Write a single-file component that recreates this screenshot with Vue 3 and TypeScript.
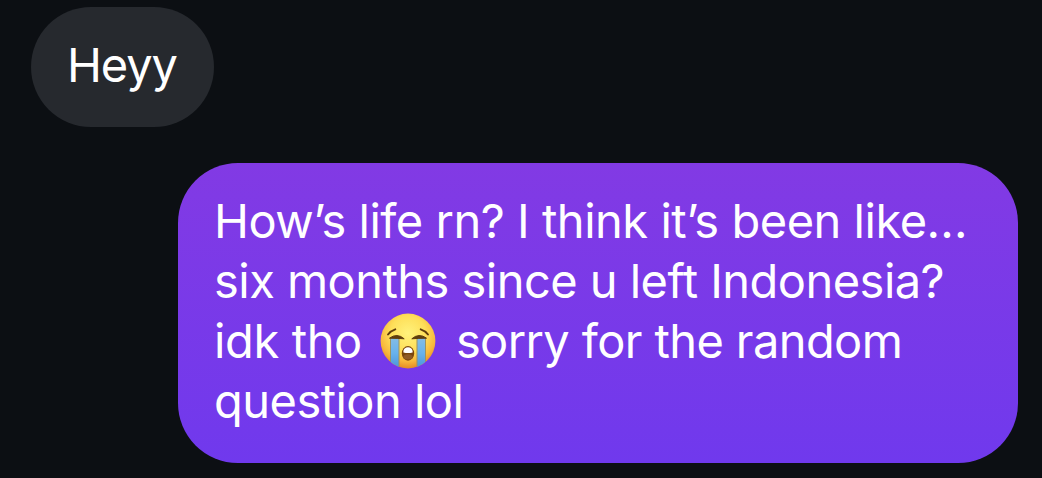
<script setup lang="ts">
interface TextLine {
  id: string
  text: string
  dots?: string
  after?: string
}

const greeting = 'Heyy'
const lines: TextLine[] = [
  { id: 'one', text: 'How’s life rn? I think it’s been like', dots: '...' },
  { id: 'two', text: 'six months since u left Indonesia?' },
  { id: 'three', text: 'idk tho', after: 'sorry for the random' },
  { id: 'four', text: 'question lol' },
]
</script>

<template>
  <main class="chat">
    <div class="bubble received"><span class="hey">{{ greeting }}</span></div>
    <div class="bubble sent">
      <div v-for="line in lines" :key="line.id" class="line" :class="line.id">
        <span class="text">{{ line.text }}<span v-if="line.dots" class="dots">{{ line.dots }}</span></span>
        <svg v-if="line.after" class="emoji" viewBox="0 0 56 56" role="img" aria-label="Loudly crying face">
          <defs>
            <radialGradient id="face" cx="50%" cy="36%" r="64%">
              <stop offset="0" stop-color="#fff27c" />
              <stop offset="0.5" stop-color="#fedf59" />
              <stop offset="0.8" stop-color="#f8b83b" />
              <stop offset="1" stop-color="#e58a25" />
            </radialGradient>
            <linearGradient id="tear" x1="0" x2="0" y1="0" y2="1">
              <stop offset="0" stop-color="#86bde4" />
              <stop offset="0.5" stop-color="#68b2ec" />
              <stop offset="1" stop-color="#4a92d8" />
            </linearGradient>
            <clipPath id="disc"><circle cx="28" cy="28" r="27.4" /></clipPath>
          </defs>
          <circle cx="28" cy="28" r="27.4" fill="url(#face)" />
          <g clip-path="url(#disc)">
            <path d="M10.500 24.500Q15 23 19 25V56H10.500Z" fill="url(#tear)" stroke="#9b9262" stroke-width="1" />
            <path d="M37 25Q41 23 45.500 24.500V56H37Z" fill="url(#tear)" stroke="#9b9262" stroke-width="1" />
          </g>
          <g fill="none" stroke="#5f3d0c" stroke-linecap="round">
            <path d="M8 21.500Q10.500 17.800 15.300 16.300M40.700 16.300Q45.500 17.800 48 21.500" stroke-width="1.9" />
          </g>
          <path d="M9.500 25.200Q17 19.500 24.200 25.800Q17.500 25.200 9.500 25.200ZM46.500 25.200Q39 19.500 31.800 25.800Q38.500 25.200 46.500 25.200Z" fill="#5f3d0c" stroke="#5f3d0c" stroke-width="1" stroke-linejoin="round" />
          <ellipse cx="28" cy="40.400" rx="6.200" ry="7.300" fill="#79450d" />
          <path d="M23.400 39.400V38Q24.300 34.300 28 34.300T32.600 38V39.400Q28 40.600 23.400 39.400Z" fill="#fff" />
          <ellipse cx="28" cy="43.800" rx="4.500" ry="2.600" fill="#8f5a25" />
        </svg>
        <span v-if="line.after" class="text after">{{ line.after }}</span>
      </div>
    </div>
  </main>
</template>

<style>
body {
  margin: 0;
  background: #0c0f13;
}
</style>

<style scoped>
.chat {
  box-sizing: border-box;
  display: flex;
  flex-direction: column;
  gap: 36px;
  width: 1042px;
  height: 478px;
  padding: 7px 24px 0 31px;
  overflow: hidden;
  background: #0c0f13;
  color: #fff;
  font-family: Inter, "Liberation Sans", sans-serif;
  font-size: 47px;
  line-height: 60px;
}
.bubble {
  box-sizing: border-box;
  border-radius: 60px;
  white-space: nowrap;
}
.received {
  align-self: flex-start;
  width: 183px;
  height: 120px;
  padding: 28px 36px;
  background: #26292e;
  letter-spacing: -1.1px;
}
.sent {
  align-self: flex-end;
  width: 840px;
  height: 300px;
  padding: 28px 36px;
  background: linear-gradient(#823ae4, #7039ed);
  letter-spacing: -0.53px;
}
.line {
  display: flex;
  height: 60px;
}
.one {
  letter-spacing: -0.48px;
}
.dots {
  letter-spacing: 0.2px;
}
.three {
  letter-spacing: -0.38px;
}
.after {
  letter-spacing: -0.6px;
}
.emoji {
  flex: none;
  width: 56px;
  height: 56px;
  margin: 2px 20px 0 18px;
}
</style>
